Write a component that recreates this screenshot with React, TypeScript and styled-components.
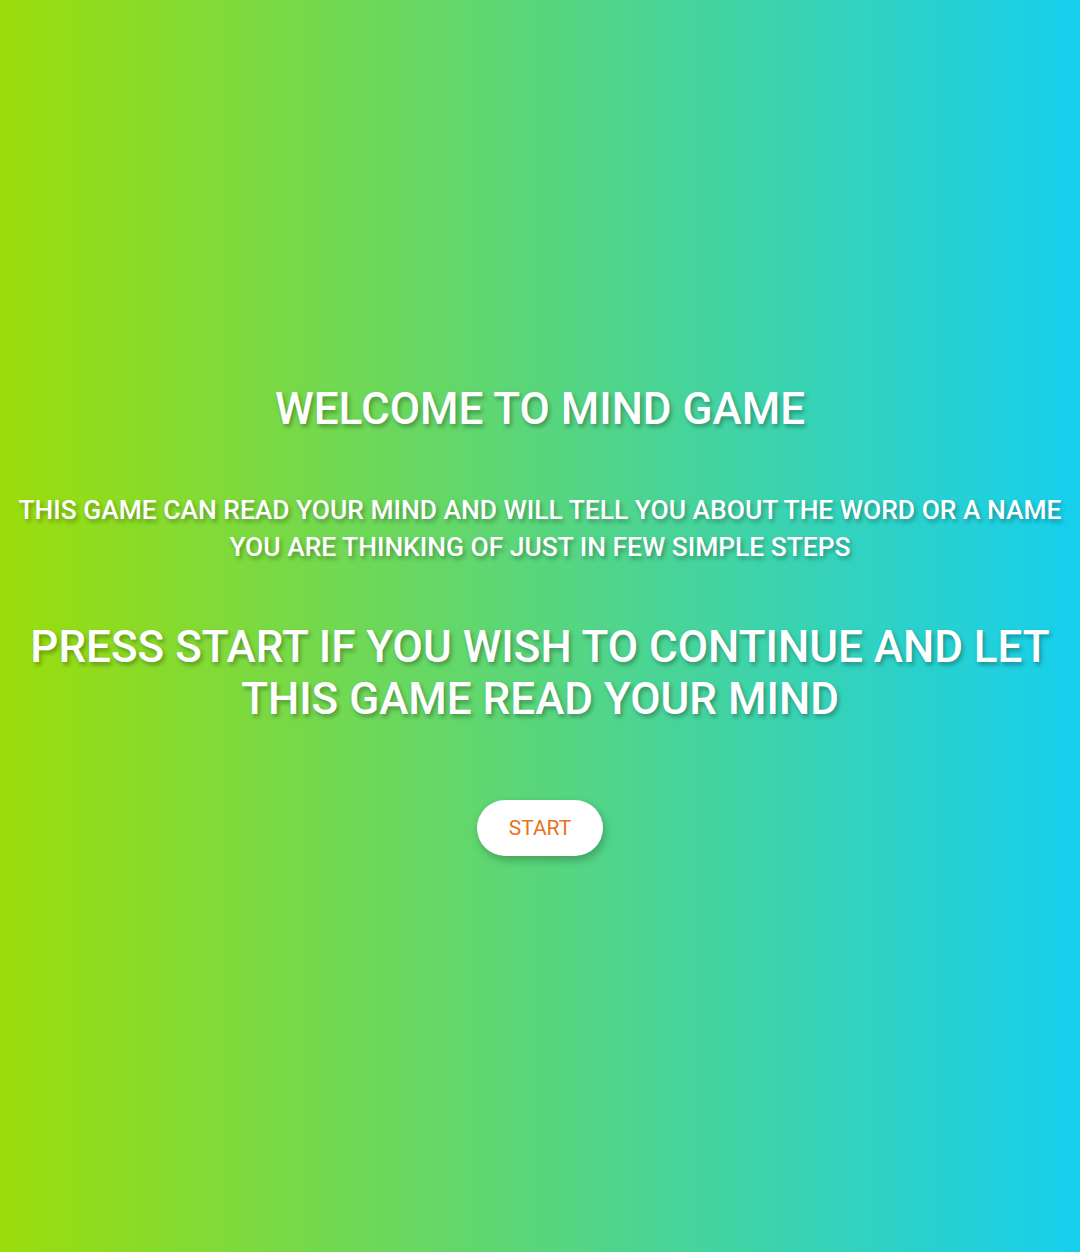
import React from "react";
import styled, { createGlobalStyle } from "styled-components";

const Global = createGlobalStyle`
  html, body { margin: 0; padding: 0; }
  body { font-family: Roboto, "Liberation Sans", sans-serif; }
`;

const Page = styled.main`
  min-height: 100vh;
  box-sizing: border-box;
  background: linear-gradient(to right, #9bdd0a, #16cfee);
  display: flex;
  flex-direction: column;
  align-items: center;
  justify-content: center;
  text-align: center;
  color: #ffffff;
  text-shadow: 2px 3px 4px rgba(0, 0, 0, 0.3);
  padding: 0 16px 13px;
`;

const Title = styled.h1`
  margin: 0;
  font-size: 44px;
  font-weight: 500;
  line-height: 53px;
`;

const Intro = styled.p`
  margin: 56px 0 0;
  font-size: 26.4px;
  font-weight: 500;
  line-height: 37px;
`;

const Prompt = styled.h2`
  margin: 55px 0 0;
  font-size: 44px;
  font-weight: 500;
  line-height: 52px;
`;

const StartButton = styled.button`
  margin-top: 75px;
  border: none;
  background: #ffffff;
  color: #e8731f;
  font-family: Roboto, "Liberation Sans", sans-serif;
  font-size: 21px;
  line-height: 24px;
  padding: 16px 32px;
  border-radius: 30px;
  box-shadow: 2px 4px 8px rgba(0, 0, 0, 0.25);
  cursor: pointer;
  text-shadow: none;
`;

export default function App() {
  return (
    <>
      <Global />
      <Page>
        <Title>WELCOME TO MIND GAME</Title>
        <Intro>
          THIS GAME CAN READ YOUR MIND AND WILL TELL YOU ABOUT THE WORD OR A NAME
          <br />
          YOU ARE THINKING OF JUST IN FEW SIMPLE STEPS
        </Intro>
        <Prompt>
          PRESS START IF YOU WISH TO CONTINUE AND LET
          <br />
          THIS GAME READ YOUR MIND
        </Prompt>
        <StartButton>START</StartButton>
      </Page>
    </>
  );
}
